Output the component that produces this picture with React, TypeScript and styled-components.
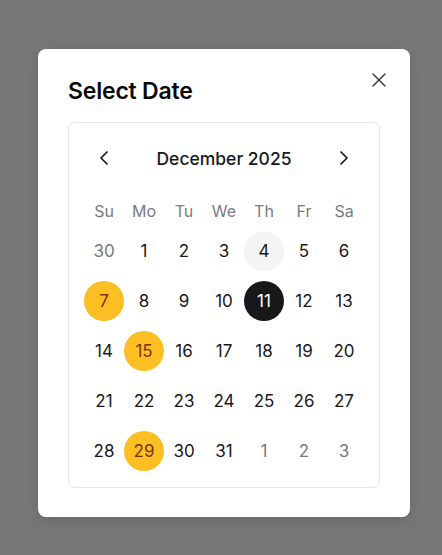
import React from "react";
import styled, { createGlobalStyle } from "styled-components";
import { X, ChevronLeft, ChevronRight } from "lucide-react";

const Global = createGlobalStyle`
  html, body { margin: 0; padding: 0; }
  body {
    background: #777777;
    font-family: Inter, "Noto Sans", sans-serif;
    width: 442px;
    height: 555px;
    overflow: hidden;
  }
`;

const Page = styled.div`
  width: 442px;
  height: 555px;
  padding-top: 49px;
  padding-left: 38px;
  box-sizing: border-box;
`;

const Modal = styled.div`
  position: relative;
  width: 372px;
  height: 468px;
  box-sizing: border-box;
  background: #ffffff;
  border-radius: 8px;
  padding: 26px 29px 0 30px;
  box-shadow: 0 4px 16px rgba(0, 0, 0, 0.12);
`;

const Title = styled.h2`
  margin: 0 0 15px 0;
  font-size: 23px;
  line-height: 32px;
  font-weight: 600;
  color: #0a0a0a;
  letter-spacing: -0.2px;
`;

const CloseButton = styled.button`
  position: absolute;
  top: 19px;
  right: 19px;
  width: 24px;
  height: 24px;
  padding: 0;
  border: none;
  background: none;
  color: #3f3f46;
  display: flex;
  align-items: center;
  justify-content: center;
`;

const CalendarBox = styled.div`
  width: 312px;
  box-sizing: border-box;
  border: 1px solid #e7e7e9;
  border-radius: 7px;
  padding: 15px 15px 16px 15px;
`;

const Header = styled.div`
  display: flex;
  align-items: center;
  justify-content: space-between;
  height: 40px;
  margin-bottom: 13px;
`;

const NavButton = styled.button`
  width: 40px;
  height: 40px;
  padding: 0;
  border: none;
  background: none;
  color: #18181b;
  display: flex;
  align-items: center;
  justify-content: center;
`;

const Month = styled.div`
  font-size: 17.5px;
  font-weight: 500;
  color: #18181b;
`;

const WeekRow = styled.div`
  display: grid;
  grid-template-columns: repeat(7, 40px);
  height: 40px;
`;

const Grid = styled.div`
  display: grid;
  grid-template-columns: repeat(7, 40px);
  row-gap: 10px;
`;

const WeekDay = styled.div`
  display: flex;
  align-items: center;
  justify-content: center;
  font-size: 16px;
  color: #7a7a82;
`;

type Variant = "normal" | "muted" | "today" | "selected" | "marked";

const Day = styled.div<{ $v: Variant }>`
  width: 40px;
  height: 40px;
  border-radius: 50%;
  display: flex;
  align-items: center;
  justify-content: center;
  font-size: 17px;
  color: ${(p) =>
    p.$v === "muted"
      ? "#7a7a82"
      : p.$v === "selected"
      ? "#ffffff"
      : p.$v === "marked"
      ? "#78350f"
      : "#18181b"};
  background: ${(p) =>
    p.$v === "today"
      ? "#f4f4f5"
      : p.$v === "selected"
      ? "#18181b"
      : p.$v === "marked"
      ? "#fbbf24"
      : "transparent"};
`;

const weekdays = ["Su", "Mo", "Tu", "We", "Th", "Fr", "Sa"];

const days: { n: number; v: Variant }[] = [
  { n: 30, v: "muted" },
  ...Array.from({ length: 31 }, (_, i) => {
    const n = i + 1;
    let v: Variant = "normal";
    if (n === 4) v = "today";
    if (n === 11) v = "selected";
    if (n === 7 || n === 15 || n === 29) v = "marked";
    return { n, v };
  }),
  { n: 1, v: "muted" },
  { n: 2, v: "muted" },
  { n: 3, v: "muted" },
];

export default function App() {
  return (
    <>
      <Global />
      <Page>
        <Modal>
          <Title>Select Date</Title>
          <CloseButton aria-label="Close">
            <X size={24} strokeWidth={1.5} />
          </CloseButton>
          <CalendarBox>
            <Header>
              <NavButton aria-label="Previous month">
                <ChevronLeft size={24} strokeWidth={1.75} />
              </NavButton>
              <Month>December 2025</Month>
              <NavButton aria-label="Next month">
                <ChevronRight size={24} strokeWidth={1.75} />
              </NavButton>
            </Header>
            <WeekRow>
              {weekdays.map((w) => (
                <WeekDay key={w}>{w}</WeekDay>
              ))}
            </WeekRow>
            <Grid>
              {days.map((d, i) => (
                <Day key={i} $v={d.v}>
                  {d.n}
                </Day>
              ))}
            </Grid>
          </CalendarBox>
        </Modal>
      </Page>
    </>
  );
}
